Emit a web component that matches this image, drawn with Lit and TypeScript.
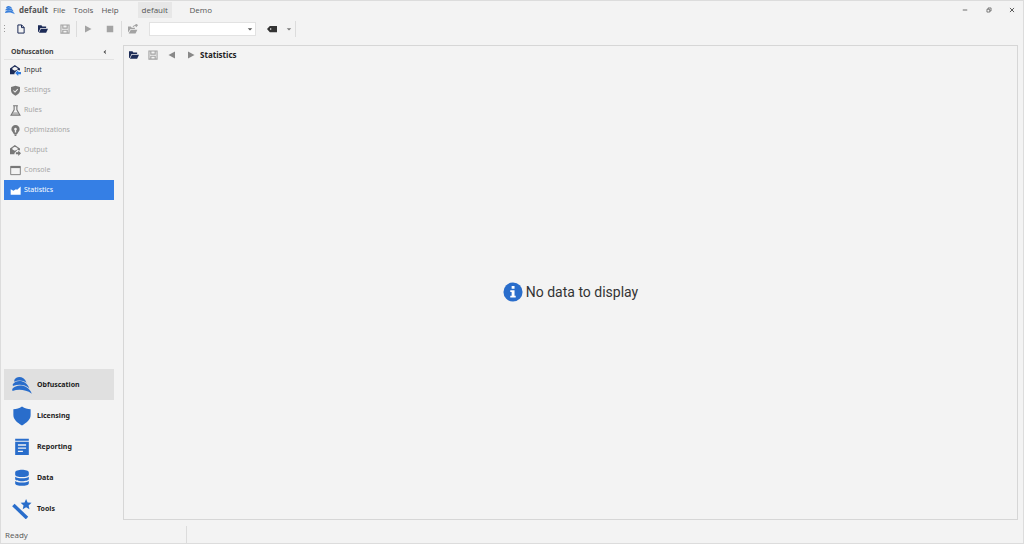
import { LitElement, html, svg, css, nothing, type TemplateResult } from "lit";
import { customElement, property, state } from "lit/decorators.js";

const envelope = svg`<path fill="currentColor" fill-rule="evenodd" d="M0 5 7 0l7.500 5V8L11 7 6.500 11.500V13.500H0zM3.500 4.500v2L7 8.500 11 6.500v-2L7 2.500z"/>`;

const glyphs: Record<string, TemplateResult> = {
  brand: svg`<path fill="currentColor" d="M2.500 5.500C5 .8 13 .8 16 8.500 12 5.800 7 5.500 2.500 7.300zM.8 10.300C4.500 4.800 15.500 5 19 14.500 14 10.200 7 9.800 1 12.200zM.2 15.500C5 9.500 17.500 10 21.800 20.500 15 16 7.500 15.300.5 17.500z"/>`,
  file: svg`<path fill="none" stroke="currentColor" stroke-width="1.600" d="M3 1.500h6L13 5.500v9H3zM8.800 1.500v4.300H13"/>`,
  open: svg`<path fill="currentColor" d="M0 2h5.500L7 4h6v2.500H4L1.500 12 0 13z"/><path fill="currentColor" d="M4.700 7.500H16L13 14H1.500z"/>`,
  save: svg`<path fill="none" stroke="currentColor" stroke-width="1.800" d="M1.500 1.500h13v13h-13zM4.500 1.500v5h7v-5M4.500 14.500v-4.500h7v4.500"/>`,
  play: svg`<path fill="currentColor" d="M2 1 15 8 2 15z"/>`,
  back: svg`<path fill="currentColor" d="M14 1 1 8l13 7z"/>`,
  stop: svg`<path fill="currentColor" d="M1.500 1.500h13v13h-13z"/>`,
  export: svg`<path fill="currentColor" d="M0 4h4.500L6 6h5v2H4L0 13.500zM4.500 9H15l-3 6H1z"/><path fill="none" stroke="currentColor" stroke-width="1.700" d="M8 4.500C9 2.500 11 2 14.500 2M12 0l3 2-2.500 2.800"/>`,
  tag: svg`<path fill="currentColor" fill-rule="evenodd" d="M0 8 4.500 3H16v10H4.500zM5 6.900v2.200h1.800V6.900z"/>`,
  caret: svg`<path fill="currentColor" d="M2 6h12l-6 6z"/>`,
  input: svg`${envelope}<path fill="#2f7be0" d="M7.500 11.500 12 7.500v2.500h4v3.500h-4V16z"/>`,
  settings: svg`<path fill="currentColor" d="M8 1 14.500 3v5c0 4-3.500 6-6.500 7.500C5 14 1.500 12 1.500 8V3z"/><path fill="none" stroke="#f3f3f3" stroke-width="1.500" d="M5 8l2.300 2.300L11.300 6"/>`,
  rules: svg`<path fill="none" stroke="currentColor" stroke-width="1.600" d="M4.500 1h7M6 1v6L1.500 15h13L10 7V1"/><path fill="currentColor" opacity=".5" d="M4.500 10.500h7l2.500 4H2z"/>`,
  optimizations: svg`<path fill="currentColor" fill-rule="evenodd" d="M8 0a6 6 0 0 1 6 6c0 3-3 4.500-3.500 7H5.500C5 10.500 2 9 2 6A6 6 0 0 1 8 0zM8 4a2 2 0 0 0-1 3.700V11h2V7.700A2 2 0 0 0 8 4zM6 13.500h4L9 16H7z"/>`,
  output: svg`${envelope}<path fill="currentColor" d="M16 12l-4-4v2.500H8.500v3H12V16z"/>`,
  console: svg`<path fill="none" stroke="currentColor" stroke-width="1.300" d="M1 2h14v12H1z"/><path fill="currentColor" d="M1 1.500h14v3H1z"/>`,
  statistics: svg`<path fill="currentColor" d="M1 6l4 2.500L8.500 6l2 1L15.500 2v12H1z"/>`,
  licensing: svg`<path fill="currentColor" d="M11 .5C14 2.500 17 3.400 20.500 3.700V10c0 5-4.500 8.500-9.500 11.500C6 18.500 1.500 15 1.500 10V3.700C5 3.400 8 2.500 11 .5z"/>`,
  reporting: svg`<path fill="currentColor" fill-rule="evenodd" d="M3.500 2h15v2h-15zM3.500 5.200h15v14.600h-15zM6.500 8v1.500h9V8zM6.500 11.500V13h9v-1.500zM6.500 15v1.500H12V15z"/>`,
  data: svg`<path fill="currentColor" d="M3.500 5C3.500 1 18.500 1 18.500 5v2.300c0 3.500-15 3.500-15 0zM3.500 9.500c3 2.200 12 2.200 15 0v2.700c0 3.200-15 3.200-15 0zM3.500 14.200c3 2.200 12 2.200 15 0V17c0 3.500-15 3.500-15 0z"/>`,
  tools: svg`<path stroke="currentColor" stroke-width="3.800" d="M1.500 6.500 16.500 21"/><path fill="currentColor" d="m15.500 0 1.700 3.800 4.300.4-3.200 2.900.9 4.200-3.700-2.200-3.700 2.200.9-4.200-3.200-2.900 4.300-.4z"/>`,
  info: svg`<circle cx="11" cy="11" r="10.500" fill="currentColor"/><path fill="#fff" d="M9.500 4.500h3.200v2.800H9.500zM8 9h4.700v6H14v2H8v-2h1.500v-4H8z"/>`,
  minimize: svg`<path stroke="currentColor" stroke-width="2" d="M2 8h12"/>`,
  restore: svg`<path fill="none" stroke="currentColor" stroke-width="1.700" d="M2.500 6h7.500v7.500H2.500zM5.500 5.500V2.500h8v8h-3"/>`,
  close: svg`<path stroke="currentColor" stroke-width="2.300" d="m2.500 2.500 11 11M13.500 2.500l-11 11"/>`,
  collapse: svg`<path fill="currentColor" d="M11 2 4 8l7 6-2-6z"/>`,
};

@customElement("app-icon")
export class AppIcon extends LitElement {
  @property() name = "file";
  @property({ type: Number }) grid = 16;

  static styles = css`
    :host { display: block; flex: none; width: 10px; height: 10px; }
    svg { display: block; width: 100%; height: 100%; }
  `;

  render() {
    return html`<svg viewBox="0 0 ${this.grid} ${this.grid}" aria-hidden="true">${glyphs[this.name] ?? nothing}</svg>`;
  }
}

interface Page {
  id: string;
  label: string;
  enabled: boolean;
}

const pages: Page[] = [
  { id: "input", label: "Input", enabled: true },
  { id: "settings", label: "Settings", enabled: false },
  { id: "rules", label: "Rules", enabled: false },
  { id: "optimizations", label: "Optimizations", enabled: false },
  { id: "output", label: "Output", enabled: false },
  { id: "console", label: "Console", enabled: false },
  { id: "statistics", label: "Statistics", enabled: true },
];

const sections = [
  { icon: "brand", label: "Obfuscation" },
  { icon: "licensing", label: "Licensing" },
  { icon: "reporting", label: "Reporting" },
  { icon: "data", label: "Data" },
  { icon: "tools", label: "Tools" },
];

@customElement("app-root")
export class AppRoot extends LitElement {
  @state() private page = "statistics";
  @state() private section = "Obfuscation";

  static styles = css`
    :host {
      display: flex;
      flex-direction: column;
      box-sizing: border-box;
      min-height: 100vh;
      border: 1px solid #dcdcdc;
      background: #f3f3f3;
      color: #555;
      font: 7px/10px "Noto Sans", "Open Sans", sans-serif;
    }
    * { box-sizing: border-box; }
    button {
      display: flex;
      align-items: center;
      justify-content: center;
      flex: none;
      margin: 0;
      padding: 0;
      border: 0;
      background: none;
      color: inherit;
      font: inherit;
      text-align: left;
    }
    h1, h2, p, ul { margin: 0; padding: 0; font: inherit; list-style: none; }

    .titlebar { display: flex; align-items: center; height: 18px; padding-left: 4px; font-family: "Open Sans", sans-serif; font-size: 8px; }
    .brand { color: #3a80dc; }
    .title { margin-left: 4px; font-weight: 700; }
    .menu { display: flex; gap: 8px; margin-left: 5px; }
    .tabs { display: flex; margin-left: 19px; }
    .tab { width: 34px; height: 16px; }
    .tab.current { background: #e7e7e7; }
    .tab.other { width: 58px; }
    .window { display: flex; margin-left: auto; }
    .window button { width: 24px; height: 18px; color: #444; }
    .window app-icon { width: 6px; height: 6px; }
    .window button:last-child { width: 22px; }

    .toolbar { display: flex; align-items: center; height: 20px; padding-left: 3px; }
    .grip { width: 1px; height: 8px; margin-right: 5px; background: repeating-linear-gradient(#999 0 1px, transparent 1px 3px); }
    .tool { width: 22px; height: 18px; color: #a3a3a3; }
    .tool.ready { color: #1c2b57; }
    .small app-icon { width: 8px; height: 8px; }
    .rule { width: 1px; height: 16px; background: #dcdcdc; }
    .combo { display: grid; align-items: center; width: 107px; height: 14px; margin: 0 5px; }
    .combo select {
      grid-area: 1 / 1;
      appearance: none;
      width: 100%;
      height: 100%;
      padding: 0 12px 0 4px;
      border: 1px solid #e2e2e2;
      border-radius: 0;
      background: #fff;
      color: #333;
      font: inherit;
    }
    .combo app-icon { grid-area: 1 / 1; justify-self: end; width: 6px; height: 6px; margin-right: 3px; color: #555; pointer-events: none; }
    .tag { color: #333; }
    .more { width: 12px; color: #777; }
    .more app-icon { width: 6px; height: 6px; }

    .workspace { display: flex; flex: 1; gap: 9px; padding: 5px 5px 2px 3px; }
    .sidebar { display: flex; flex: none; flex-direction: column; justify-content: space-between; width: 110px; }
    .heading { display: flex; align-items: center; justify-content: space-between; height: 16px; padding: 0 2px 0 7px; border-bottom: 1px solid #e2e2e2; color: #444; }
    .heading h2 { font-weight: 700; }
    .heading button { width: 14px; height: 12px; }
    .heading app-icon { width: 6px; height: 6px; }
    .page { justify-content: flex-start; gap: 3px; width: 100%; height: 20px; padding-left: 6px; color: #1c2b57; }
    .page app-icon { width: 11px; height: 11px; }
    .page span { color: #333; }
    .page:disabled { color: #777; }
    .page:disabled span { color: #a6a6a6; }
    .page.current { background: #357fe5; color: #fff; }
    .page.current span { color: #fff; }
    .section { justify-content: flex-start; gap: 5px; width: 100%; height: 31px; padding-left: 8px; color: #222; font-weight: 700; }
    .section.current { background: #e0e0e0; }
    .section app-icon { width: 20px; height: 20px; color: #296dcb; }

    .panel { display: flex; flex: 1; flex-direction: column; min-width: 0; margin: 1px 0 4px; border: 1px solid #d6d6d6; }
    .panelbar { display: flex; align-items: center; height: 17px; color: #222; }
    .panelbar .tool { width: 19px; height: 17px; }
    .panelbar .small { color: #888; }
    .panelbar h1 { font-size: 8px; font-weight: 700; }
    .empty { display: flex; flex: 1; align-items: center; justify-content: center; gap: 3px; padding-top: 2px; color: #333; font-family: Roboto, "Noto Sans", sans-serif; font-size: 14px; line-height: 20px; }
    .empty app-icon { width: 20px; height: 20px; color: #296dcb; }

    .status { display: flex; align-items: center; height: 17px; font-family: "Open Sans", sans-serif; font-size: 8px; }
    .status p { width: 186px; padding-left: 4px; border-right: 1px solid #dcdcdc; line-height: 17px; }
  `;

  private tool(icon: string, label: string, kind = "") {
    return html`<button class="tool ${kind}" aria-label=${label}><app-icon name=${icon}></app-icon></button>`;
  }

  render() {
    return html`
      <header class="titlebar">
        <app-icon class="brand" name="brand" grid="22"></app-icon>
        <span class="title">default</span>
        <nav class="menu"><button>File</button><button>Tools</button><button>Help</button></nav>
        <nav class="tabs"><button class="tab current">default</button><button class="tab other">Demo</button></nav>
        <div class="window">
          ${["minimize", "restore", "close"].map((n) => html`<button aria-label=${n}><app-icon name=${n}></app-icon></button>`)}
        </div>
      </header>

      <div class="toolbar" role="toolbar">
        <span class="grip"></span>
        ${this.tool("file", "New", "ready")} ${this.tool("open", "Open", "ready")} ${this.tool("save", "Save")}
        <span class="rule"></span>
        ${this.tool("play", "Run", "small")} ${this.tool("stop", "Stop", "small")}
        <span class="rule"></span>
        ${this.tool("export", "Export")}
        <label class="combo">
          <select aria-label="Configuration"><option></option></select>
          <app-icon name="caret"></app-icon>
        </label>
        ${this.tool("tag", "Tag", "tag")} ${this.tool("caret", "More", "more")}
        <span class="rule"></span>
      </div>

      <div class="workspace">
        <aside class="sidebar">
          <nav>
            <div class="heading">
              <h2>Obfuscation</h2>
              <button aria-label="Collapse"><app-icon name="collapse"></app-icon></button>
            </div>
            <ul>
              ${pages.map(
                (p) => html`<li>
                  <button class="page ${p.id === this.page ? "current" : ""}" ?disabled=${!p.enabled} @click=${() => (this.page = p.id)}>
                    <app-icon name=${p.id}></app-icon><span>${p.label}</span>
                  </button>
                </li>`
              )}
            </ul>
          </nav>
          <nav>
            ${sections.map(
              (s) => html`<button class="section ${s.label === this.section ? "current" : ""}" @click=${() => (this.section = s.label)}>
                <app-icon name=${s.icon} grid="22"></app-icon>${s.label}
              </button>`
            )}
          </nav>
        </aside>

        <main class="panel">
          <div class="panelbar">
            ${this.tool("open", "Open", "ready")} ${this.tool("save", "Save")} ${this.tool("back", "Back", "small")}
            ${this.tool("play", "Forward", "small")}
            <h1>Statistics</h1>
          </div>
          <div class="empty"><app-icon name="info" grid="22"></app-icon><p>No data to display</p></div>
        </main>
      </div>

      <footer class="status"><p>Ready</p></footer>
    `;
  }
}
